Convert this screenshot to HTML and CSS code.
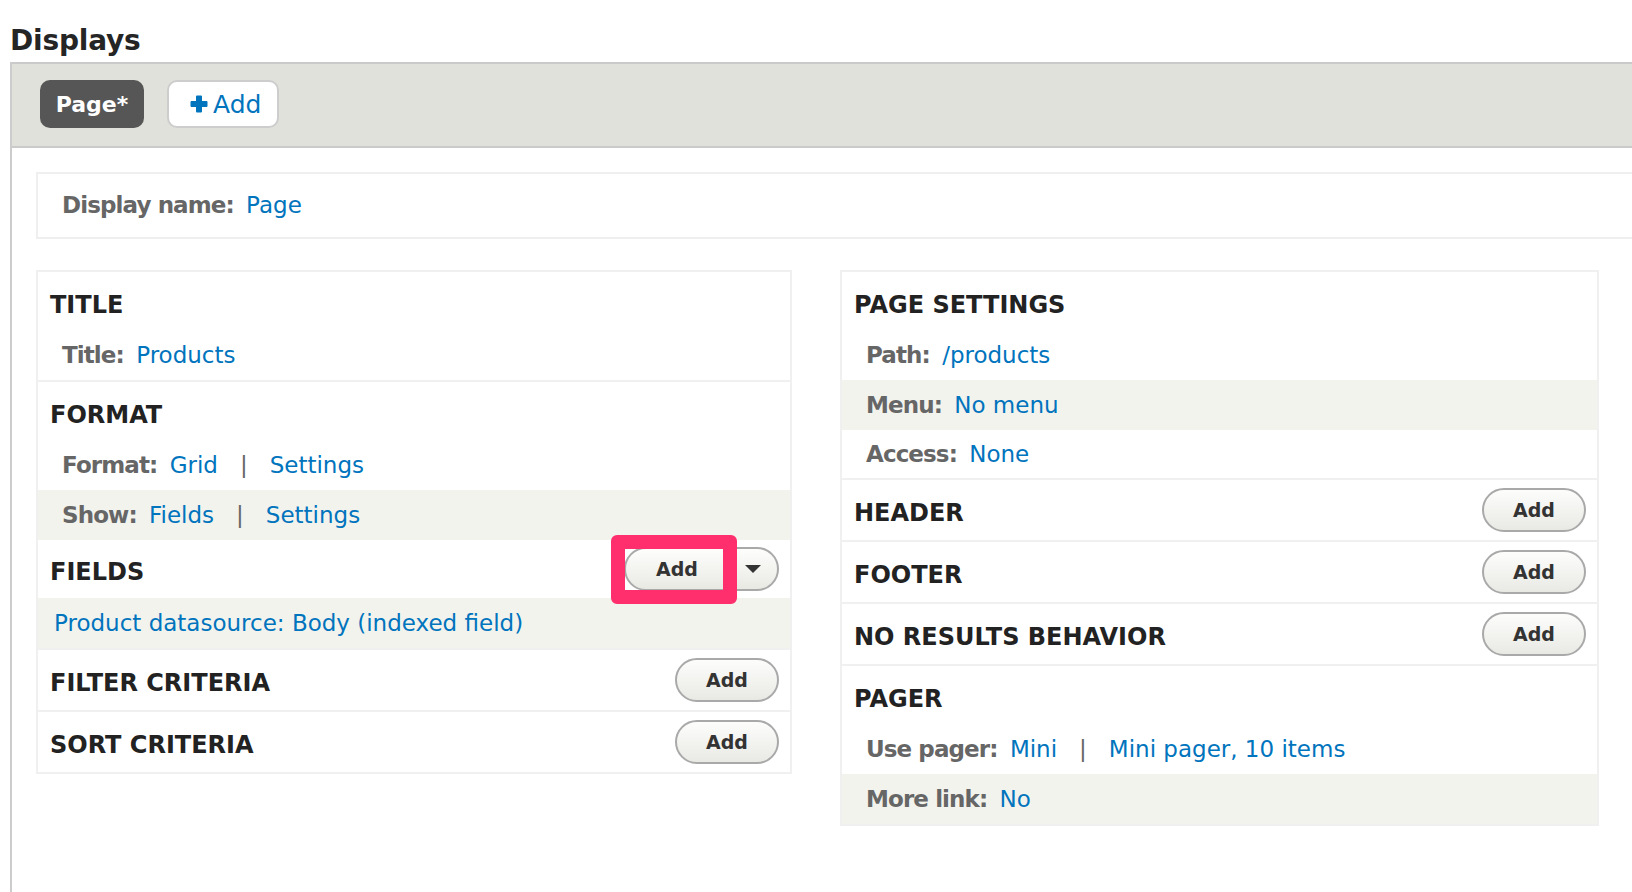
FILE: index.html
```html
<!DOCTYPE html>
<html lang="en">
<head>
<meta charset="utf-8">
<title>Displays</title>
<link rel="stylesheet" href="styles.css">
</head>
<body>
<h1 class="page-title">Displays</h1>
<div class="views-display">
  <div class="display-tabs">
    <a class="tab tab-active">Page*</a>
    <a class="tab tab-add"><svg class="plus" viewBox="0 0 18 18" width="18" height="18"><path d="M6 1.5a1 1 0 0 1 1-1h4a1 1 0 0 1 1 1V6h4.5a1 1 0 0 1 1 1v4a1 1 0 0 1-1 1H12v4.5a1 1 0 0 1-1 1H7a1 1 0 0 1-1-1V12H1.5a1 1 0 0 1-1-1V7a1 1 0 0 1 1-1H6z" fill="#0074bd"/></svg>Add</a>
  </div>
  <div class="display-body">
    <div class="display-name"><span class="label">Display name:</span> <a class="link">Page</a></div>
    <div class="columns">
      <div class="column">
        <section class="section">
          <div class="section-head"><h3 class="section-title">TITLE</h3></div>
          <div class="detail"><span class="label">Title:</span> <a class="link">Products</a></div>
        </section>
        <section class="section">
          <div class="section-head"><h3 class="section-title">FORMAT</h3></div>
          <div class="detail"><span class="label">Format:</span> <a class="link">Grid</a><span class="sep">|</span><a class="link">Settings</a></div>
          <div class="detail alt"><span class="label">Show:</span> <a class="link">Fields</a><span class="sep">|</span><a class="link">Settings</a></div>
        </section>
        <section class="section section-flush">
          <div class="section-head has-button compact">
            <h3 class="section-title">FIELDS</h3>
            <div class="split-wrap">
              <span class="btn split"><span class="split-main">Add</span><span class="split-toggle"><span class="caret"></span></span></span>
              <span class="highlight"></span>
            </div>
          </div>
          <div class="detail alt field"><a class="link">Product datasource: Body (indexed field)</a></div>
        </section>
        <section class="section">
          <div class="section-head has-button"><h3 class="section-title">FILTER CRITERIA</h3><span class="btn">Add</span></div>
        </section>
        <section class="section">
          <div class="section-head has-button"><h3 class="section-title">SORT CRITERIA</h3><span class="btn">Add</span></div>
        </section>
      </div>
      <div class="column">
        <section class="section">
          <div class="section-head"><h3 class="section-title">PAGE SETTINGS</h3></div>
          <div class="detail"><span class="label">Path:</span> <a class="link">/products</a></div>
          <div class="detail alt"><span class="label">Menu:</span> <a class="link">No menu</a></div>
          <div class="detail short"><span class="label">Access:</span> <a class="link">None</a></div>
        </section>
        <section class="section">
          <div class="section-head has-button"><h3 class="section-title">HEADER</h3><span class="btn">Add</span></div>
        </section>
        <section class="section">
          <div class="section-head has-button"><h3 class="section-title">FOOTER</h3><span class="btn">Add</span></div>
        </section>
        <section class="section">
          <div class="section-head has-button"><h3 class="section-title">NO RESULTS BEHAVIOR</h3><span class="btn">Add</span></div>
        </section>
        <section class="section">
          <div class="section-head"><h3 class="section-title">PAGER</h3></div>
          <div class="detail"><span class="label">Use pager:</span> <a class="link">Mini</a><span class="sep">|</span><a class="link">Mini pager, 10 items</a></div>
          <div class="detail alt"><span class="label">More link:</span> <a class="link">No</a></div>
        </section>
      </div>
    </div>
  </div>
</div>
</body>
</html>
```
FILE: styles.css
```css
html, body {
  margin: 0;
  padding: 0;
  background: #ffffff;
}
body {
  font-family: "DejaVu Sans", "Liberation Sans", sans-serif;
  color: #222222;
  overflow: hidden;
  width: 1632px;
  height: 892px;
}
.page-title {
  margin: 0;
  padding: 25px 0 5px 10px;
  font-size: 28px;
  line-height: 32px;
  font-weight: bold;
  letter-spacing: -0.2px;
  color: #252525;
}
.views-display {
  margin-left: 10px;
  width: 1720px;
  min-height: 830px;
  border-left: 2px solid #cccccc;
}
.display-tabs {
  display: flex;
  gap: 23px;
  padding: 16px 28px 18px;
  background: #e1e1db;
  border-top: 2px solid #cacaca;
  border-bottom: 2px solid #cacaca;
}
.tab {
  box-sizing: border-box;
  height: 48px;
  display: flex;
  align-items: center;
  border-radius: 10px;
  text-decoration: none;
}
.tab-active {
  width: 104px;
  justify-content: center;
  background: #565656;
  color: #ffffff;
  font-weight: bold;
  font-size: 22px;
}
.tab-add {
  width: 112px;
  padding-left: 21px;
  gap: 5px;
  background: #ffffff;
  border: 2px solid #cdcdcd;
  color: #0074bd;
  font-size: 25px;
}
.plus {
  display: block;
  flex: none;
}
.display-body {
  padding: 24px 24px;
}
.display-name {
  box-sizing: border-box;
  height: 67px;
  padding: 0 24px;
  border: 2px solid #efefef;
  line-height: 63px;
  font-size: 23px;
}
.label {
  font-weight: bold;
  color: #666666;
  letter-spacing: -0.9px;
  margin-right: 5px;
}
.link {
  color: #0074bd;
  text-decoration: none;
}
.sep {
  color: #666666;
  margin: 0 22px;
}
.columns {
  margin-top: 31px;
  display: grid;
  grid-template-columns: 756px 759px;
  gap: 48px;
  align-items: start;
}
.column {
  border: 2px solid #f0f0f0;
}
.section + .section {
  border-top: 2px solid #f0f0f0;
}
.section + .section-flush {
  border-top: 0;
}
.section-head {
  display: flex;
  align-items: center;
  justify-content: space-between;
  min-height: 58px;
  padding: 0 11px 0 12px;
}
.section-head.has-button {
  min-height: 60px;
}
.section-head.compact {
  min-height: 58px;
}
.section-title {
  margin: 0;
  padding-top: 8px;
  font-size: 24px;
  line-height: 30px;
  font-weight: bold;
  color: #222222;
}
.has-button .section-title {
  padding-top: 6px;
}
.detail {
  padding-left: 24px;
  line-height: 50px;
  font-size: 23px;
  white-space: nowrap;
}
.detail.short {
  line-height: 48px;
}
.detail.alt {
  background: #f3f3ee;
}
.detail.field {
  padding-left: 16px;
}
.btn {
  box-sizing: border-box;
  display: inline-flex;
  align-items: center;
  justify-content: center;
  width: 104px;
  height: 44px;
  border: 2px solid #a9a9a9;
  border-radius: 22px;
  background: linear-gradient(#fdfdfc, #e9e9e4);
  color: #333333;
  font-size: 19px;
  font-weight: bold;
}
.split-wrap {
  position: relative;
  display: flex;
}
.btn.split {
  width: 155px;
  justify-content: flex-start;
}
.split-main {
  padding-left: 30px;
  width: 69px;
}
.split-toggle {
  flex: 1;
  height: 100%;
  display: flex;
  align-items: center;
  justify-content: center;
  border-left: 1px solid #cfcfcf;
}
.caret {
  width: 0;
  height: 0;
  border-left: 8px solid transparent;
  border-right: 8px solid transparent;
  border-top: 8px solid #333333;
  margin-left: 2px;
}
.highlight {
  position: absolute;
  left: -13px;
  top: -12px;
  width: 126px;
  height: 69px;
  box-sizing: border-box;
  border: 14px solid #ff2e6c;
  border-radius: 6px;
}
```
